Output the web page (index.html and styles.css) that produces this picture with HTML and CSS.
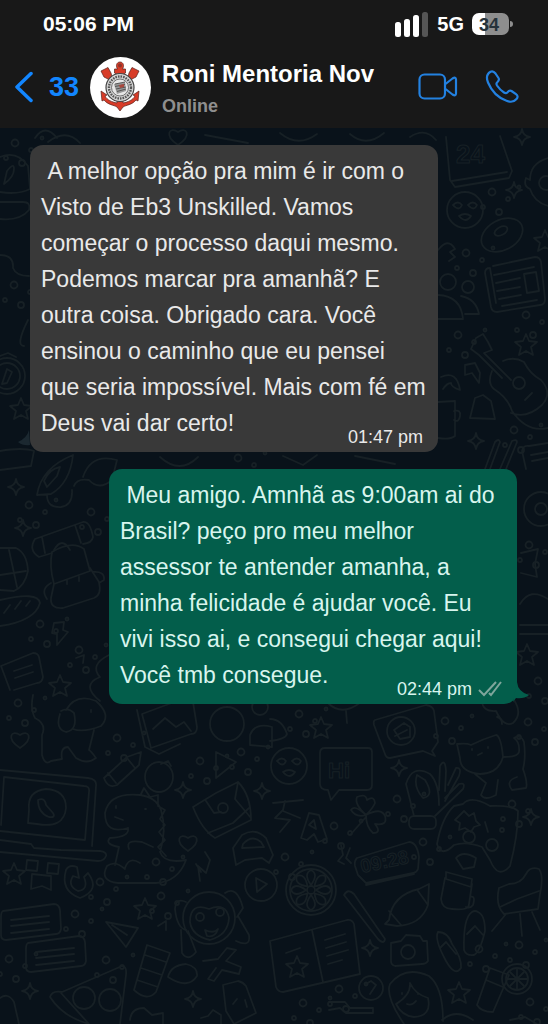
FILE: index.html
```html
<!DOCTYPE html>
<html lang="pt-BR">
<head>
<meta charset="utf-8">
<meta name="viewport" content="width=device-width, initial-scale=1">
<title>Roni Mentoria Nov</title>
<link rel="stylesheet" href="styles.css">
</head>
<body>
<header class="top">
  <div class="status">
    <time class="clock">05:06 PM</time>
    <div class="indicators">
      <svg class="signal" viewBox="0 0 34 25" aria-hidden="true"><rect x="0" y="10" width="6" height="15" rx="2.5"/><rect x="9" y="7" width="6" height="18" rx="2.5"/><rect x="18" y="3" width="6" height="22" rx="2.5"/><rect class="off" x="27" y="0" width="6" height="25" rx="2.5"/></svg>
      <span class="network">5G</span>
      <span class="battery">34</span>
    </div>
  </div>
  <nav class="bar">
    <button class="back" type="button" aria-label="Voltar">
      <svg class="chevron" viewBox="0 0 18 32" aria-hidden="true"><path d="M16 2.500 2 16l14 13.500"/></svg>
      <span>33</span>
    </button>
    <svg class="avatar" viewBox="0 0 61 61" role="img" aria-label="Foto do contato">
      <circle cx="30.500" cy="30.500" r="30.500" fill="#fff"/>
      <g stroke="#55211b" stroke-width=".7" fill="#d83c28">
        <path d="M11 14 18 10.500 21 16l1 4 5 6-3 3-6-7-4-2z"/>
        <path d="M49 14 42 10.500 39 16l-1 4-5 6 3 3 6-7 4-2z"/>
        <path d="M26.500 21v-4l-2-1v-4h3c-2-3-1-7 2.500-7s4.500 4 2.500 7h3v4l-2 1v4z"/>
        <path d="M27 39h6v7c5-1 10-3 12-7l-2-1 6-4-1 10-2-1c-4 5-10 5-13 7l-3 4-3-4c-3-2-9-2-13-7l-2 1-1-10 6 4-2 1c2 4 7 6 12 7z"/>
      </g>
      <circle cx="30" cy="8.500" r="2" fill="#8d342a"/>
      <circle cx="30" cy="30.500" r="14" fill="#d6d6d6" stroke="#444" stroke-width="1.200"/>
      <circle cx="30" cy="30.500" r="11" fill="none" stroke="#555" stroke-width="2.400" stroke-dasharray="1.600 1"/>
      <circle cx="30" cy="30.500" r="8.500" fill="#e6e6e6" stroke="#555" stroke-width=".8"/>
      <path d="m24 27 11-2 1 9-9 3z" fill="#999"/>
      <path d="m25 27 10-2M25 29.500l10-2M26 32l10-2M27 34.500l9-2.500" stroke="#444" stroke-width=".8"/>
      <path d="m29 28 5-1v3l-4 1z" fill="#a9483e"/>
    </svg>
    <div class="contact">
      <h1 class="name">Roni Mentoria Nov</h1>
      <p class="presence">Online</p>
    </div>
    <div class="actions">
      <button class="action" type="button" aria-label="Chamada de vídeo">
        <svg class="video" viewBox="0 0 40 28" aria-hidden="true"><rect x="1.500" y="1.500" width="25.500" height="24" rx="5"/><path d="m27.500 11 7-5.500q3.500-2 3.500 1v14q0 3-3.500 1l-7-5.500"/></svg>
      </button>
      <button class="action" type="button" aria-label="Chamada de voz">
        <svg class="phone" viewBox="0 0 34 34" aria-hidden="true"><path d="M5.500 1.800C7.500.8 9 1.500 10.500 3.500l3 4.500c1 1.500 0 3-1 4-1.200 1-1.300 2.200-.5 3.500 2 3 4 5 7 7 1.500 1 2.500.8 3.500-.3 1.200-1.400 2.500-2.200 4-1.200l4.500 3.200c2 1.500 2 3 .5 4.800-2.500 3-5.800 3.500-10 1.800C12.500 27.500 6.500 21 3 12.500 1 7.500 1.800 4 5.500 1.800Z"/></svg>
      </button>
    </div>
  </nav>
</header>

<main class="chat">
  <svg class="wallpaper" viewBox="0 128 548 896" preserveAspectRatio="xMidYMin slice" aria-hidden="true">
    <defs>
      <path id="star" d="m0-11 3 7 8 1-6 5 2 8-7-4-7 4 2-8-6-5 8-1z"/>
      <path id="spark" d="M0-8q1 7 8 8-7 1-8 8-1-7-8-8 7-1 8-8z"/>
      <path id="heart" d="M0 8C-15-2-8-11 0-5 8-11 15-2 0 8z"/>
      <g id="dots"><circle r="3.500"/><circle cx="16" cy="7" r="2"/><circle cx="-9" cy="15" r="2"/><circle cx="7" cy="20" r="3"/><circle cx="27" cy="-5" r="1.500"/></g>
      <g id="face"><circle r="18"/><path d="M-12-5q5-5 9 0-3 7-9 0M3-5q5-5 9 0-3 7-9 0M-6 6q6-4 12 0-5 8-12 0"/></g>
      <g id="note"><path d="m-28-14 51-7q5 0 6 6l1 19q-1 5-5 5l-50 6q-5 0-5-5v-18q0-5 2-6zM-20-5l38-4M-20 1l38-4M-20 8l38-4"/></g>
      <path id="petal" d="M0-5q-8-11 0-15 8 4 0 15z"/>
    </defs>
    <!-- top right -->
    <path d="m446 137 4 43 5 7 54-9 3-7-12-35M452 181l55-9"/><text x="456" y="163" class="doodle-24">24</text>
    <use href="#spark" x="522" y="137"/><use href="#spark" x="514" y="190"/><use href="#face" x="465" y="210"/>
    <path d="M548 158q-18 5-18 22l-4-2q-3 8 4 11 4 13 18 17"/><circle cx="546" cy="183" r="7"/>
    <ellipse cx="502" cy="235" rx="22" ry="15" transform="rotate(-28 502 235)"/><ellipse cx="501" cy="231" rx="7" ry="4" transform="rotate(-28 501 231)"/>
    <path d="M438 250q10-13 17-1l-5 3 5 5-6 4"/>
    <path d="m493 266 42-9q5 0 6 5l4 37q0 6-5 6l-43 7q-5 0-6-5l-6-34q0-5 5-5l6 35M494 275l40-8M496 283l24-5M497 291l23-4M499 299l22-4M524 274l12-2 3 19-12 2zM502 306l35-6"/>
    <circle cx="448" cy="282" r="8"/><circle cx="468" cy="287" r="6"/><path d="M438 295q23 1 25 24h-25M461 296q15 3 18 18h-14"/>
    <use href="#star" x="526" y="345"/><path d="m471 349 5-11 7-4 5 8 4 8-8 3 27 27M471 349l8 6 23 23M492 371q-5 12 2 18 14 9 18 22 15 22 36 17M503 361q11-5 21 1 6 12 17 18 12 13 1 25-15 14-31 8M525 400l7-7"/><circle cx="519" cy="383" r="6"/>
    <path d="m465 365 10-2 5 10-1 10-7-10-7 2zM441 377q16-7 19 13-9-3-9-7-4 0-8 6M438 402l17-1v35q-5 4-17 2M454 411q7-2 6 5t-6 4M470 418l5-20 8-3 8 6 4 18z"/>
    <use href="#spark" x="476" y="441"/><path d="m485 469 10-27q4-4 5 0l-10 27M500 469l12-28q5-2 5 1l-11 27M526 469l-4-18q1-6 7-5l19-3M531 455l17-3M532 461l16-3"/>
    <use href="#dots" x="492" y="192"/><use href="#dots" x="466" y="253"/><use href="#dots" x="526" y="315"/><use href="#dots" x="458" y="335"/><use href="#dots" x="514" y="430"/><use href="#star" x="545" y="241"/>
    <!-- top centre and left -->
    <use href="#dots" x="15" y="143"/><use href="#heart" x="178" y="137"/><path d="M35 138q10-15 22 0M48 142q18-14 32 1M205 135l43 8M280 133q18 15 37 1M350 134q16 14 34-1M410 137q15-10 26 3"/>
    <path d="M0 157q17-7 28 9l2 23q-12 6-30 3M4 184l3-13q7-9 7-2 0 8-10 15M0 202h23q8 0 6 8-9 11-29 9M0 255q14 0 13 13 3 8 16 8M28 320q-13 26-4 26"/>
    <circle cx="7" cy="376" r="18"/><circle cx="7" cy="376" r="13"/><path d="m2 384 5-15 5 3-5 11zM0 356l8-3 8 4"/><use href="#star" x="21" y="409"/><use href="#dots" x="14" y="285"/>
    <!-- left -->
    <path d="M0 451q23-4 34 0l-3 15-31 4M37 495q4-27 36-40-3 28-22 39zM47 495q0 13 14 12 12-2 11-17M44 481q5-12 16-14l-3 9-10 11zM83 477q8-24 34-17l-5 20q-13 11-23 0-12-2-15 6"/>
    <use href="#spark" x="16" y="487"/><use href="#spark" x="23" y="528"/><use href="#dots" x="29" y="505"/><use href="#dots" x="91" y="512"/>
    <path d="m35 539 48-17q7-1 10 15-1 6-10 7M35 539q-7 11 4 18l13-4M42 537l3 16M75 525l6 18M54 550q8-14 16 0"/>
    <path d="M52 552q20-12 32-3l6 22-36 13q-5-18-2-32M54 584l-3 14q-1 11 12 10l31-10q8-3 5-16l-9-14M51 583q-11 6-4 16M93 572q12-1 11 8l-5 3M67 580v4M79 577v4"/>
    <path d="M0 548h16q11 5 12 23-3 15-14 20l-14-1M9 550l8 37M0 575l26-4M0 600q38-9 40 3-5 18-40 23M4 613l6-8M15 609l6-8M26 606l4-5"/>
    <path d="m54 623 10-1-1 8 5 2-11 13v-11l-5-1zM1 666l32-13q5 0 6 4l4 20q-1 6-6 6l-23 7M1 666l9 24M14 671l18-6M15 678l18-6"/>
    <use href="#dots" x="40" y="624"/><use href="#dots" x="79" y="650"/><use href="#star" x="60" y="686"/><use href="#dots" x="18" y="703"/><path d="m76 658 8-3-1 8M109 655q-20 10-9 22-20 8 0 24"/>
    <path d="M33 695q-3 14 2 23 12 6 7 17M60 714q-5 15 6 18 12-2 8-19-6-6-13-2M66 710q10-17 30-9 16 14 5 25-18 7-28 3M91 710v2M42 735v20q3 11 9 6l11-2q-2-12 6-12l8 11q11 7 20 0-5-7-7-8l5-20"/>
    <use href="#heart" x="20" y="740"/><path d="m142 714 43-16q6 0 8 4l4 25q0 7-6 7l-40 14zM137 710l8 37 14 7 21-10M153 729l12-11 11 9 8-5 7 9"/>
    <circle cx="227" cy="724" r="17"/><circle cx="260" cy="707" r="8"/><path d="M250 735q5-13 22-8v20l-22-2z"/>
    <!-- lower left -->
    <path d="m0 770 88 8q9 1 8 8l-4 60M4 777l80 9q6 0 5 6l-4 48-85-9M4 777l-3 48M0 840l31 4 3 4 27 2 39 1q7 1 6 5-2 5-8 5l-98-9"/>
    <path d="m28 823 1-13q-2-19 17-21 20 1 20 19-2 21-29 16zM38 800q7-3 8 5l7 8q3 5-4 4-11-4-11-17z"/>
    <path d="m104 778 23-21 14-5-2 13-22 20q-9 4-13-7M108 773l8 10M127 758l8 10"/><ellipse cx="159" cy="777" rx="14" ry="15"/><path d="m161 764 7-3 3 5"/>
    <path d="M128 828q-23 7-23-15 4-21 35-18 16 2 21 15 6 20-1 42 4 12 26 8-8 22-30 23-28 0-38 0-19-2-11-17 8-6 18 3M128 828q2 9-18 10-6 6 9 9l-4 18M129 849q-4-10 13-7l11 5M125 868q4-12 15-5M141 794l3-6 6 9 8-2v11l7 4-5 9 5 6-6 7 6 8-7 7 8 9M116 806v2M115 817l8 3M145 809h1"/>
    <path d="m216 752 20 10-20 16zM193 807l23-14 22-11q13 13 13 38l-36 18q-13-8-22-31M206 801l8 12 7-1M238 782l-3 17 16 19M208 833l25-10 16-15"/><circle cx="223" cy="808" r="5"/>
    <use href="#dots" x="117" y="738"/><use href="#dots" x="200" y="761"/><use href="#dots" x="241" y="752"/><use href="#spark" x="183" y="790"/><use href="#spark" x="262" y="791"/><use href="#heart" x="188" y="843"/>
    <path d="m236 865-3-17 9-13q13-8 24 3l7 17-4 8-7-5-17 2zM243 844q9-10 18-2l3 5-22 1z"/><use href="#star" x="14" y="874"/>
    <path d="m27 860 11 1-1 10-11-1zM48 863l11 1-1 10-11-1zM32 874l19 2v14l-9-4-11 3zM66 870q-6 21 14 28 21-8 8-25l-4 4q5 13-6 14-11-5-5-15l6 2-2-11q-8-3-11 3"/>
    <use href="#dots" x="100" y="882"/><use href="#dots" x="156" y="862"/><circle cx="261" cy="885" r="16"/><path d="m256 878 11 6-10 8zM205 852l5 8-4 13-8-7 2 15M196 864l5 8"/>
    <use href="#star" x="145" y="909"/><use href="#dots" x="75" y="914"/><use href="#dots" x="161" y="896"/><use href="#note" x="31" y="925"/><use href="#note" x="56" y="957"/>
    <path d="m106 922 32 6-12 19zM112 925l15 10"/><path d="m158 926 8-5v9M147 945l23 8-14 39q-9 10-22-2zM145 955l21 7M141 968l21 7M137 980l21 7"/>
    <circle cx="209" cy="918" r="26"/><path d="M190 922q0-20 19-13 17-7 20 9-1 17-19 22-18-4-20-18M186 902q-10-5-11 7 2 19 11 21M225 893q12-8 18 15l-6 9M181 930l1 23q6 9 14-1l-8-21M238 916l11 19q2 13-13 6M205 930q9 4 13-1-3 9-11 7z"/><circle cx="200" cy="917" r="4"/><circle cx="220" cy="912" r="4"/>
    <path d="M168 977q3-12 18-13 12 3 11 12-9 14-29 1M203 961l15-2 9-11 9 2-10 11 15 6-2 7-17-4-8 11-6-2 8-11M223 985l15-4q5 1 8 5l10 27-22 11-8-13zM233 1004l4-5M245 1000l2 7"/>
    <path d="M50 997q2-7 12-5l60-26q5 0 4 9l-6 49M50 997q13 20 39 27M61 993l28 31"/><circle cx="84" cy="998" r="11"/><circle cx="110" cy="1000" r="11"/><use href="#spark" x="30" y="991"/><use href="#spark" x="193" y="999"/><use href="#dots" x="9" y="959"/><use href="#dots" x="106" y="960"/><path d="M0 998q8-6 14 4l5 22M130 1020q1-12 14-12l8 7 11-2v11M201 1018l7-2 5-6 8 5v9"/>
    <!-- lower right -->
    <use href="#star" x="321" y="728"/><use href="#dots" x="299" y="714"/><use href="#face" x="289" y="766"/><path d="M270 719q12 0 17 15-1 5-17 7M328 703q14 14 33-1M346 711l1 12"/>
    <path d="M325 748h43q4 0 4 4v33q0 5-5 5h-28l-8 10-3-10q-8 0-8-6v-31q0-5 5-5z"/><text x="328" y="778" class="doodle-hi">Hi</text>
    <path d="m375 720 51-15q7 1 8 6l4 31-6 9 3 5-12-5-33 7q-4 0-5-4l-11-29q-1-4 1-5z"/><circle cx="401" cy="731" r="14"/><path d="m394 730 10-7 6 4v10l-10 2zM395 736l12-6"/>
    <path d="M457 744q10-1 14 1 12-6 25-10 5 1 7 22-5 17-23 17-20-2-20-16zM504 757q14 0 15-5 1-10-5-14 7-4 10 4 2 16-1 27 5 14 3 19l-14 2q-7-9 5-13M475 774l11 9-5 12q4 6 15 0l2-15M472 749v1M488 747v1M478 755l4-2"/>
    <path d="M482 700q0 12 14 11 8 17 17 12 10-9 1-23M497 717q5 1 5 7"/><use href="#dots" x="445" y="721"/><use href="#dots" x="528" y="722"/><use href="#spark" x="399" y="768"/><use href="#dots" x="397" y="799"/>
    <path d="m414 816-8-32q6-20 24-10 9 9 9 31M417 775q-4 12 6 23 12-2 2-18zM439 790l1-24q5-9 6 5l-1 20M448 785l8-17q6-1 3 8l-14 25M445 798l14-14q7-2 4 5l-28 27"/><rect x="409" y="816" width="27" height="13" rx="5"/>
    <path d="M273 803l30-3M285 801l-2 9-8 8 15 2-10 12M283 811l17 7M301 838l8-25 10 2 8 24-9 3-4-8-7 6zM309 825l5-5 2 9z"/>
    <path d="M366 815q-12-11-9-18 9-4 10 3 7-5 8 3-2 5-9 12 15-8 19 1 3 10-10 8 7 9-2 9-7-6-7-18-10 3-15-5 3-6 15 5M366 817l-15 17"/>
    <path d="m454 806 9-2q8-9 27 2 22-1 28 5 0 25-8 55-12 14-20-6l-8-13q-16-6-28-2-13 13-17-1 5-27 17-38M464 811l5 5 5-3 2 8 4 4-6 2-3 5-6-4-6 2 1-7-5-3zM485 822l3 10"/><circle cx="469" cy="837" r="6"/><circle cx="492" cy="845" r="6"/><circle cx="502" cy="830" r="2"/>
    <use href="#spark" x="531" y="817"/><use href="#dots" x="512" y="804"/><use href="#dots" x="334" y="826"/><use href="#dots" x="285" y="857"/><use href="#dots" x="423" y="842"/><path d="m341 845 2 10-5 6 6 3M350 848l-4 10 5 5"/>
    <path d="m357 858 52-16q8 0 10 15l-1 12q-1 3-5 4l-47 10-8-8-3-9q-1-5 2-8zM366 885l48-11"/><text x="362" y="873" class="doodle-clock" transform="rotate(-12 362 873)">09:28</text>
    <g transform="translate(311 890)"><circle r="25"/><circle r="21"/><circle r="4"/><use href="#petal"/><use href="#petal" transform="rotate(45)"/><use href="#petal" transform="rotate(90)"/><use href="#petal" transform="rotate(135)"/><use href="#petal" transform="rotate(180)"/><use href="#petal" transform="rotate(225)"/><use href="#petal" transform="rotate(270)"/><use href="#petal" transform="rotate(315)"/></g>
    <path d="m344 895 34 44q6 6 7 0l-31-45q-6-6-10 1M389 920q3-25 30-31l10-5-1 21q-7 20-31 21l-12-2zM418 891l10 14M389 911l12 14"/>
    <path d="m445 878-4 21q1 10 11 10 17 2 17-5l3-20M446 872l26 7-1 8-25-8zM470 897q6-2 3 8-3 4-7 2M456 858q7-8 20 0l-2 9-11 2z"/>
    <path d="m499 888 10-4q12 0 17-10 4-8 13-5 5 7 1 25l-2 15-34 5q-9-9-5-26M500 907l17-8 22-8M506 914l-14 17M520 914l2 22M532 912l8 18"/>
    <path d="M270 941l77-21q5-1 7 4l6 50-77 18q-5 0-7-5zM312 930l11 52M286 953l14-5M325 940l20-6M326 948l20-6M327 956l21-6M328 964l14-4"/><use href="#star" x="297" y="967"/><use href="#spark" x="370" y="948"/>
    <path d="m391 943 10-2 5-6 14 1 3 5h4l1 20q-2 3-6 3l-27 2q-4-1-4-5z"/><circle cx="408" cy="952" r="7"/><path d="M438 932q10 0 14 12 10 14 9 24-6 9-15-7-12-22-8-29M440 948l6-6 10 12M478 912q7 3 7 19-5 21-11 24-8 1-10-5-1-32 8-38 3-2 6 0M467 934l8-8 8 9"/>
    <circle cx="371" cy="988" r="12"/><path d="m366 984 5-3 5 4-6 9M404 1024q-19-28-14-40 15-19 39-8 14 11 14 45M396 1004q15-9 14-21 5 11 18 15 4 18-14 19-12-1-18-13M402 993v1M418 993v1M407 1004q5 2 9-3"/>
    <path d="m490 968 19 7-16 37q-12 0-16-7zM486 980l17 7"/><g transform="translate(517 979)"><circle r="15"/><circle r="11"/><path d="M0-10V10M-10 0H10M-7-7 7 7M7-7-7 7"/></g><use href="#star" x="459" y="993"/><use href="#dots" x="479" y="949"/><use href="#dots" x="519" y="945"/><use href="#dots" x="339" y="989"/><use href="#dots" x="303" y="1003"/><use href="#dots" x="530" y="1002"/><path d="M329 1002h16l5 6h23v5h-27l-6-5-11 2M442 1020q14-12 31 0M510 1020l15-3 12 7"/>
    <!-- right middle -->
    <circle cx="541" cy="509" r="17"/><circle cx="541" cy="509" r="6"/><use href="#dots" x="529" y="545"/><path d="M521 553l17-4-3 15 2 13-16-4M520 604q10-17 28-5M520 625h28M520 634h28"/><use href="#star" x="527" y="655"/><use href="#dots" x="538" y="681"/><path d="M160 457q20 18 38 0M283 456l20 9 14-10M355 456l40 8"/><use href="#dots" x="238" y="458"/>
  </svg>

  <article class="message received">
    <p class="text">&nbsp;A melhor opção pra mim é ir com o Visto de Eb3 Unskilled. Vamos começar o processo daqui mesmo. Podemos marcar pra amanhã? E outra coisa. Obrigado cara. Você ensinou o caminho que eu pensei que seria impossível. Mais com fé em Deus vai dar certo! <span class="meta"><time>01:47 pm</time></span></p>
    <svg class="tail" viewBox="0 0 12 18" aria-hidden="true"><path d="M11 0Q9 8 0 12q5 4 12 3z"/></svg>
  </article>

  <article class="message sent">
    <p class="text">&nbsp;Meu amigo. Amnhã as 9:00am ai do Brasil? peço pro meu melhor assessor te antender amanha, a minha felicidade é ajudar você. Eu vivi isso ai, e consegui chegar aqui! Você tmb consegue. <span class="meta"><time>02:44 pm</time>
      <svg class="checks" viewBox="0 0 24 16" role="img" aria-label="Entregue"><path d="m1 9 5 5L18 1M11 12l2 2L23 1"/></svg></span></p>
    <svg class="tail" viewBox="0 0 16 20" aria-hidden="true"><path d="M4 0Q5 10 16 13q-5 4-13 3L0 20z"/></svg>
  </article>
</main>
</body>
</html>
```

FILE: styles.css
```css
* {
  box-sizing: border-box;
}

body {
  margin: 0;
  min-height: 100vh;
  display: flex;
  flex-direction: column;
  background: #09121a;
  color: #fff;
  font-family: "Liberation Sans", Arial, Helvetica, sans-serif;
}

h1,
p {
  margin: 0;
}

button {
  border: 0;
  padding: 0;
  background: none;
  color: inherit;
  font: inherit;
  cursor: pointer;
}

svg {
  display: block;
  flex: none;
}

.top {
  background: #181818;
}

.status {
  display: flex;
  align-items: center;
  justify-content: space-between;
  height: 48px;
  padding: 0 39px 0 43px;
}

.clock {
  font-size: 21px;
  font-weight: 700;
}

.indicators {
  display: flex;
  align-items: center;
  gap: 8px;
}

.signal {
  width: 34px;
  height: 25px;
  fill: #fff;
}

.signal .off {
  fill: #555;
}

.network {
  font-size: 20px;
  font-weight: 700;
}

.battery {
  position: relative;
  width: 37px;
  height: 22px;
  padding-left: 7px;
  border-radius: 7px;
  background: linear-gradient(to right, #fff 34%, #8e8e8e 34%);
  color: #26323a;
  font-size: 18px;
  font-weight: 700;
  line-height: 24px;
}

.battery::after {
  content: "";
  position: absolute;
  left: 100%;
  top: 8px;
  width: 3px;
  height: 6px;
  margin-left: 1px;
  border-radius: 0 3px 3px 0;
  background: #8e8e8e;
}

.bar {
  display: flex;
  align-items: center;
  min-height: 80px;
  padding: 0 29px 2px 15px;
}

.back {
  display: flex;
  align-items: center;
  gap: 16px;
  margin-right: 11px;
  color: #1286ff;
  font-size: 27px;
  font-weight: 700;
}

.chevron {
  width: 18px;
  height: 32px;
  fill: none;
  stroke: #1286ff;
  stroke-width: 3.5;
  stroke-linecap: round;
  stroke-linejoin: round;
}

.avatar {
  width: 61px;
  height: 61px;
  margin-right: 11px;
}

.contact {
  flex: 1;
  min-width: 0;
  padding-top: 6px;
}

.name {
  font-size: 24px;
  line-height: 32px;
  white-space: nowrap;
}

.presence {
  color: #8f8f8f;
  font-size: 18px;
  font-weight: 700;
  line-height: 32px;
}

.actions {
  display: flex;
  align-items: center;
  gap: 27px;
}

.action svg {
  fill: none;
  stroke: #2381e0;
  stroke-width: 2.2;
  stroke-linejoin: round;
}

.video {
  width: 40px;
  height: 28px;
}

.phone {
  width: 34px;
  height: 34px;
}

.chat {
  position: relative;
  z-index: 0;
  flex: 1;
  display: flex;
  flex-direction: column;
  gap: 17px;
  padding: 17px 31px 17px 30px;
  overflow: hidden;
}

.wallpaper {
  position: absolute;
  inset: 0;
  z-index: -1;
  width: 100%;
  height: 100%;
  fill: none;
  stroke: #172025;
  stroke-width: 1.8;
  stroke-linecap: round;
  stroke-linejoin: round;
}

.wallpaper text {
  font-weight: 700;
  stroke-width: 1;
}

.doodle-24 {
  font-size: 26px;
}

.doodle-hi {
  font-size: 22px;
}

.doodle-clock {
  font-size: 19px;
}

.message {
  position: relative;
  width: 408px;
  max-width: 90%;
  padding: 8px 9px 11px 11px;
  border-radius: 13px;
}

.received {
  align-self: flex-start;
  background: #393939;
  color: #e9e9e9;
}

.sent {
  align-self: flex-end;
  background: #035e4b;
  color: #d8f5ee;
}

.text {
  display: flow-root;
  font-size: 23px;
  line-height: 36px;
}

.meta {
  float: right;
  display: flex;
  align-items: center;
  gap: 6px;
  margin: 20px 6px -8px 0;
  font-size: 18px;
  line-height: 24px;
}

.checks {
  width: 24px;
  height: 16px;
  fill: none;
  stroke: #7fa69c;
  stroke-width: 2;
}

.tail {
  position: absolute;
}

.received .tail {
  right: 100%;
  bottom: 4px;
  width: 12px;
  height: 18px;
  fill: #1b2830;
}

.sent .tail {
  left: 100%;
  bottom: 2px;
  width: 16px;
  height: 20px;
  margin-left: -4px;
  fill: #035e4b;
}
```
